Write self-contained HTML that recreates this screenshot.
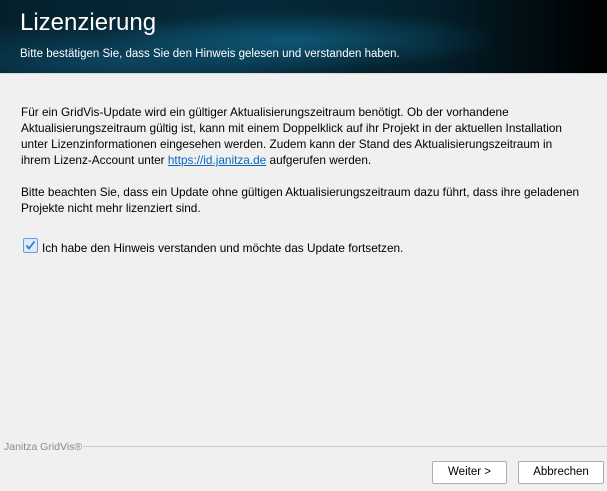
<!DOCTYPE html>
<html><head><meta charset="utf-8"><style>
body{margin:0;width:607px;height:491px;background:#f0f0f0;font-family:"Liberation Sans",sans-serif;overflow:hidden;position:relative;color:#000}
.hdr{position:absolute;left:0;top:0;width:607px;height:73px;background:radial-gradient(ellipse 200px 30px at 300px 40px,rgba(20,120,160,.55),transparent),radial-gradient(ellipse 250px 40px at 120px 60px,rgba(20,100,140,.5),transparent),linear-gradient(90deg,#04202c 0%,#062a3a 40%,#04202c 70%,#000 100%);border-bottom:1px solid #d8d8d8}
.t{position:absolute;left:20px;top:9px;font-size:24px;color:#fff}
.s{position:absolute;left:20px;top:48px;font-size:11.5px;color:#fff}
.p{position:absolute;left:21px;font-size:11.8px;line-height:16px;white-space:nowrap}
a{color:#0b64c0}
.cb{position:absolute;left:23px;top:238px;width:13px;height:13px;border:1px solid #6a9ed6;background:#dcebfa;border-radius:2px}
.foot{position:absolute;left:4px;top:441px;font-size:10.5px;color:#8a8a8a}
.line{position:absolute;left:83px;top:446px;width:524px;height:1px;background:#c8c8c8}
.btn{position:absolute;top:461px;height:21px;border:1px solid #adadad;background:#fff;font-size:11.5px;text-align:center;line-height:21px;border-radius:2px}
</style></head><body>
<div class="hdr"><div class="t">Lizenzierung</div><div class="s">Bitte bestätigen Sie, dass Sie den Hinweis gelesen und verstanden haben.</div></div>
<div class="p" style="top:104px">Für ein GridVis-Update wird ein gültiger Aktualisierungszeitraum benötigt. Ob der vorhandene<br>Aktualisierungszeitraum gültig ist, kann mit einem Doppelklick auf ihr Projekt in der aktuellen Installation<br>unter Lizenzinformationen eingesehen werden. Zudem kann der Stand des Aktualisierungszeitraum in<br>ihrem Lizenz-Account unter <a href="#">https://id.janitza.de</a> aufgerufen werden.</div>
<div class="p" style="top:184px">Bitte beachten Sie, dass ein Update ohne gültigen Aktualisierungszeitraum dazu führt, dass ihre geladenen<br>Projekte nicht mehr lizenziert sind.</div>
<div class="cb"><svg width="13" height="13" viewBox="0 0 13 13"><path d="M2.5 6.5 L5 9.5 L10.5 2.5" fill="none" stroke="#3a7cc4" stroke-width="1.8"/></svg></div>
<div class="p" style="top:240px;left:42px">Ich habe den Hinweis verstanden und möchte das Update fortsetzen.</div>
<div class="foot">Janitza GridVis®</div><div class="line"></div>
<div class="btn" style="left:432px;width:73px">Weiter &gt;</div>
<div class="btn" style="left:518px;width:84px">Abbrechen</div>
</body></html>
